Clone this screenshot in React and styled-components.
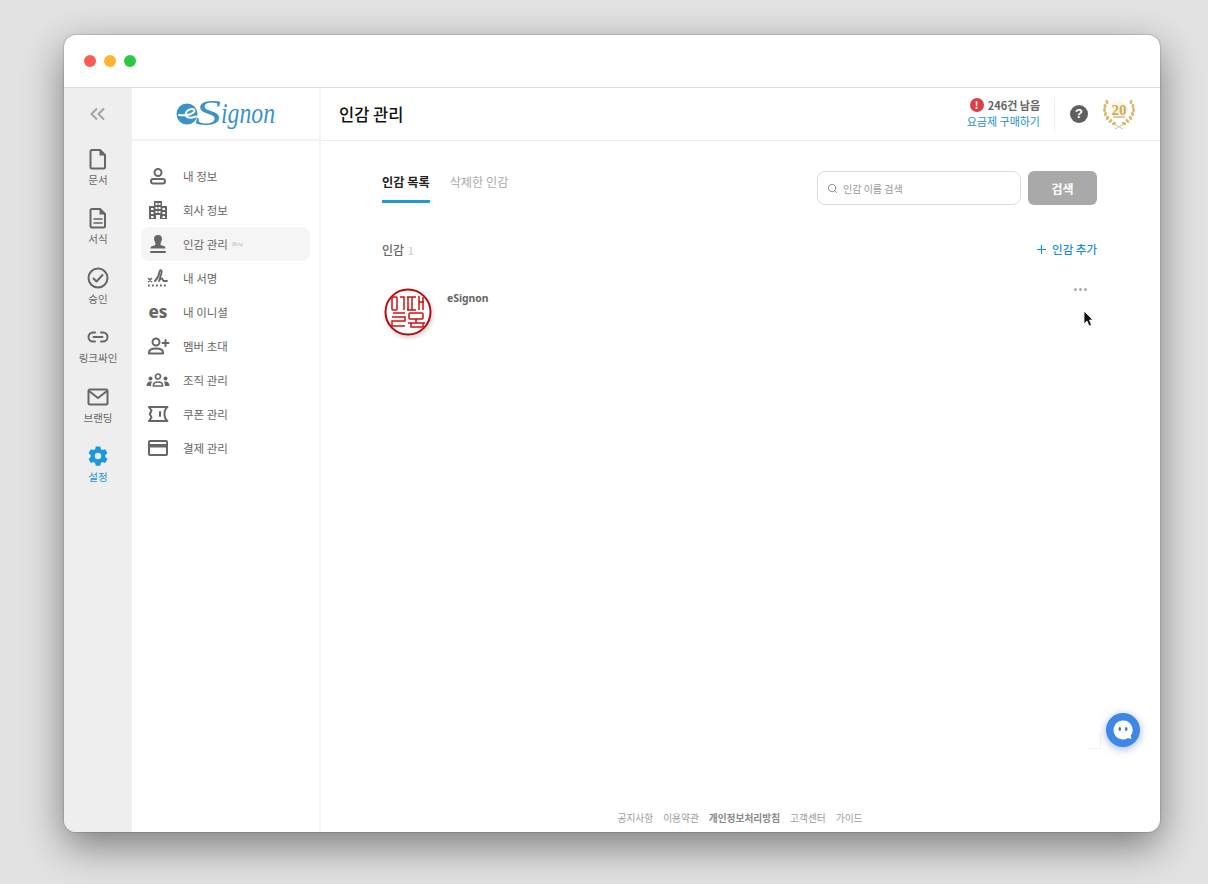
import React from "react";
import styled, { createGlobalStyle } from "styled-components";
import { Search } from "lucide-react";

const GlobalStyle = createGlobalStyle`
  html, body {
    margin: 0;
    padding: 0;
    background: #e2e2e2;
  }
  body {
    font-family: "Noto Sans CJK KR", "Noto Sans", sans-serif;
  }
  * {
    box-sizing: border-box;
  }
`;

const Page = styled.div`
  width: 1208px;
  height: 884px;
  padding: 35px 48px 52px 64px;
  overflow: hidden;
`;

const Win = styled.div`
  position: relative;
  width: 1096px;
  height: 797px;
  background: #fff;
  border-radius: 12px;
  box-shadow: 0 14px 40px rgba(0, 0, 0, 0.46), 0 0 2px rgba(0, 0, 0, 0.4);
  display: flex;
  flex-direction: column;
`;

const TitleBar = styled.div`
  height: 53px;
  flex: none;
  display: flex;
  align-items: center;
  gap: 8px;
  padding: 0 0 1px 20px;
  border-bottom: 1px solid #dedede;
`;

const Dot = styled.span`
  width: 12px;
  height: 12px;
  border-radius: 50%;
  background: ${(p) => p.color};
`;

const Body = styled.div`
  flex: 1;
  display: flex;
  min-height: 0;
`;

const Rail = styled.nav`
  width: 68px;
  flex: none;
  background: #eeeeee;
  border-bottom-left-radius: 12px;
  display: flex;
  flex-direction: column;
  align-items: center;
  padding-top: 17px;
`;

const Collapse = styled.div`
  height: 18px;
  margin-bottom: 25px;
  display: flex;
  align-items: center;
`;

const RailItem = styled.div`
  width: 68px;
  height: 59.4px;
  display: flex;
  flex-direction: column;
  align-items: center;
  color: ${(p) => (p.$active ? "#1b96e0" : "#666")};
  font-size: 10.5px;
  line-height: 15px;
  white-space: nowrap;
`;

const RailIcon = styled.div`
  height: 22px;
  margin-bottom: 2px;
  display: flex;
  align-items: center;
  justify-content: center;
`;

const Side = styled.aside`
  width: 189px;
  flex: none;
  border-right: 2px solid #f4f4f4;
  display: flex;
  flex-direction: column;
`;

const LogoBox = styled.div`
  height: 53px;
  flex: none;
  border-bottom: 2px solid #f2f2f2;
  display: flex;
  align-items: center;
  justify-content: center;
`;

const Menu = styled.div`
  padding: 17.5px 9px 0;
  display: flex;
  flex-direction: column;
`;

const MenuItem = styled.div`
  height: 34px;
  display: flex;
  align-items: center;
  border-radius: 8px;
  background: ${(p) => (p.$active ? "#f5f5f5" : "transparent")};
  color: #666;
  font-size: 11.5px;
  white-space: nowrap;
`;

const MenuIcon = styled.div`
  width: 34px;
  margin-right: 8px;
  display: flex;
  justify-content: center;
  align-items: center;
`;

const EsMark = styled.span`
  font-family: "Noto Sans", sans-serif;
  font-size: 17px;
  font-weight: 800;
  line-height: 20px;
  color: #666;
`;

const Beta = styled.em`
  font-family: "Liberation Serif", serif;
  font-size: 6px;
  color: #bbb;
  margin-left: 4px;
`;

const Main = styled.main`
  flex: 1;
  display: flex;
  flex-direction: column;
  min-width: 0;
`;

const Header = styled.header`
  height: 53px;
  flex: none;
  border-bottom: 1px solid #ececec;
  display: flex;
  align-items: center;
  padding: 0 23px 0 18px;
`;

const Title = styled.h1`
  margin: 0;
  flex: 1;
  font-size: 16.5px;
  font-weight: 500;
  color: #111;
`;

const Usage = styled.div`
  display: flex;
  flex-direction: column;
  align-items: flex-end;
  font-size: 11px;
  line-height: 16px;
  padding: 0 14px 2px 0;
  border-right: 1px solid #eee;
`;

const Remain = styled.div`
  display: flex;
  align-items: center;
  gap: 4px;
  color: #666;
  font-weight: 700;
`;

const Alert = styled.span`
  width: 14px;
  height: 14px;
  border-radius: 50%;
  background: #dc3f45;
  color: #fff;
  font-size: 10px;
  font-weight: 700;
  line-height: 14px;
  text-align: center;
`;

const Buy = styled.span`
  color: #1b8fd6;
`;

const Help = styled.span`
  width: 18px;
  height: 18px;
  margin: 0 13px 0 15px;
  border-radius: 50%;
  background: #5f5f5f;
  color: #fff;
  font-family: "Liberation Sans", sans-serif;
  font-size: 13px;
  font-weight: 700;
  line-height: 18px;
  text-align: center;
`;

const Content = styled.div`
  flex: 1;
  padding: 30px 63px 0 61px;
`;

const TopRow = styled.div`
  display: flex;
  justify-content: space-between;
  align-items: flex-start;
`;

const Tabs = styled.div`
  display: flex;
  gap: 20px;
`;

const Tab = styled.div`
  height: 32px;
  font-size: 12.2px;
  line-height: 23px;
  font-weight: ${(p) => (p.$active ? 700 : 400)};
  color: ${(p) => (p.$active ? "#222" : "#aaa")};
  border-bottom: ${(p) => (p.$active ? "3px solid #1b9ad6" : "none")};
`;

const SearchBar = styled.div`
  display: flex;
  gap: 7px;
`;

const SearchBox = styled.div`
  width: 204px;
  height: 34px;
  border: 1px solid #dcdcdc;
  border-radius: 8px;
  display: flex;
  align-items: center;
  gap: 5px;
  padding-left: 9px;
  color: #999;
  font-size: 10px;
`;

const SearchButton = styled.button`
  width: 69px;
  height: 34px;
  border: 0;
  border-radius: 6px;
  background: #a9a9a9;
  color: #fff;
  font-family: inherit;
  font-size: 12px;
  font-weight: 700;
`;

const SectionRow = styled.div`
  margin-top: 32px;
  height: 24px;
  display: flex;
  justify-content: space-between;
  align-items: center;
`;

const SectionTitle = styled.div`
  font-size: 12px;
  font-weight: 500;
  color: #666;
`;

const Count = styled.span`
  margin-left: 4px;
  font-size: 10px;
  color: #ccc;
`;

const AddLink = styled.div`
  color: #1b8fd6;
  font-size: 11.5px;
  font-weight: 500;
  display: flex;
  align-items: center;
  gap: 6px;
`;

const SealRow = styled.div`
  margin-top: 27px;
  display: flex;
  align-items: flex-start;
  padding-left: 2px;
`;

const SealName = styled.div`
  flex: 1;
  margin-left: 15px;
  margin-top: 2px;
  font-family: "Noto Sans", sans-serif;
  font-size: 10.4px;
  line-height: 16px;
  font-weight: 700;
  color: #666;
`;

const More = styled.div`
  display: flex;
  gap: 2px;
  margin: 0 10px 0 0;
`;

const MoreDot = styled.i`
  width: 3px;
  height: 3px;
  border-radius: 50%;
  background: #aaa;
`;

const Footer = styled.footer`
  height: 21px;
  flex: none;
  display: flex;
  justify-content: center;
  gap: 10px;
  padding-right: 1px;
  font-size: 9.7px;
  line-height: 14px;
  color: #999;
`;

const FootLink = styled.span`
  font-weight: ${(p) => (p.$strong ? 700 : 400)};
  color: ${(p) => (p.$strong ? "#888" : "#999")};
`;

const Cursor = styled.svg`
  position: absolute;
  left: 1019px;
  top: 275px;
`;

const Chat = styled.div`
  position: absolute;
  left: 1042px;
  top: 678px;
  width: 34px;
  height: 34px;
  border-radius: 50%;
  background: #3f87e6;
  box-shadow: 0 2px 8px rgba(40, 90, 200, 0.45);
  display: flex;
  align-items: center;
  justify-content: center;
`;

const Ghost = styled.div`
  position: absolute;
  left: 1025px;
  top: 698px;
  width: 12px;
  height: 16px;
  border-right: 1px solid #f1f1f1;
  border-bottom: 1px solid #f1f1f1;
`;

const SealMark = styled.svg`
  filter: drop-shadow(1px 2px 2px rgba(0, 0, 0, 0.2));
`;

const stroke = { fill: "none", stroke: "#666", strokeWidth: 2, strokeLinecap: "round", strokeLinejoin: "round" };

const railItems = [
  {
    label: "문서",
    icon: (
      <svg width="18" height="22" viewBox="0 0 18 22">
        <path {...stroke} d="M3 2h8l5 5v12a1.5 1.5 0 0 1-1.5 1.5H3A1.5 1.5 0 0 1 1.5 19V3.500A1.5 1.5 0 0 1 3 2z" />
        <path fill="#666" d="M10.5 2l5.5 5.5h-5.500z" />
      </svg>
    ),
  },
  {
    label: "서식",
    icon: (
      <svg width="18" height="22" viewBox="0 0 18 22">
        <path {...stroke} d="M3 2h8l5 5v12a1.5 1.5 0 0 1-1.5 1.5H3A1.5 1.5 0 0 1 1.5 19V3.500A1.5 1.5 0 0 1 3 2z" />
        <path fill="#666" d="M10.5 2l5.5 5.5h-5.500z" />
        <path {...stroke} strokeWidth="1.5" d="M5 12h8M5 16h8" />
      </svg>
    ),
  },
  {
    label: "승인",
    icon: (
      <svg width="22" height="22" viewBox="0 0 22 22">
        <circle {...stroke} cx="11" cy="11" r="9.5" />
        <path {...stroke} d="M6.5 11.5l3 3 6-6.5" />
      </svg>
    ),
  },
  {
    label: "링크싸인",
    icon: (
      <svg width="22" height="22" viewBox="0 0 22 22">
        <path {...stroke} d="M8 6.500H6a4.500 4.500 0 0 0 0 9h2M14 6.500h2a4.500 4.500 0 0 1 0 9h-2M6.500 11h9" />
      </svg>
    ),
  },
  {
    label: "브랜딩",
    icon: (
      <svg width="22" height="22" viewBox="0 0 22 22">
        <rect {...stroke} x="1.5" y="3.5" width="19" height="15" rx="1.5" />
        <path {...stroke} d="M2 5l9 7 9-7" />
      </svg>
    ),
  },
  {
    label: "설정",
    active: true,
    icon: (
      <svg width="22" height="22" viewBox="0 0 24 24">
        <path
          fill="#1b96e0"
          fillRule="evenodd"
          d="M14.5 1.5l.6 3 1.8 1 2.9-1 2.5 4.300-2.300 2v2.400l2.300 2-2.500 4.300-2.900-1-1.800 1-.6 3h-5l-.6-3-1.800-1-2.900 1-2.500-4.300 2.300-2v-2.400l-2.300-2 2.500-4.300 2.900 1 1.800-1 .6-3zM12 8.500a3.500 3.500 0 1 0 0 7 3.500 3.500 0 0 0 0-7z"
        />
      </svg>
    ),
  },
];

const menuItems = [
  {
    label: "내 정보",
    icon: (
      <svg width="18" height="18" viewBox="0 0 18 18">
        <circle {...stroke} cx="9" cy="5.5" r="3.5" />
        <rect {...stroke} x="2" y="12" width="14" height="4.5" rx="2.25" />
      </svg>
    ),
  },
  {
    label: "회사 정보",
    icon: (
      <svg width="20" height="20" viewBox="0 0 20 20">
        <path
          fill="#666"
          fillRule="evenodd"
          d="M6 1h8v5h5v13H1V6h5zM7.500 3v2H9.500V3zm3 0v2h2V3zM7.500 7v2H9.500V7zm3 0v2h2V7zM3 8v2h2.500V8zm11.500 0v2H17V8zM7.500 11v2H9.500v-2zm3 0v2h2v-2zM3 12v2h2.500v-2zm11.500 0v2H17v-2zM8 15v4h4v-4zM3 16v2h2.500v-2zm11.500 0v2H17v-2z"
        />
      </svg>
    ),
  },
  {
    label: "인감 관리",
    active: true,
    beta: true,
    icon: (
      <svg width="18" height="20" viewBox="0 0 18 20">
        <path fill="#666" d="M9 1a4 4 0 0 1 4 4c0 2-1.500 3-1.500 5 0 1 .5 1.500 3 2 1.500.3 2 1 2 2.500H1.500C1.500 13 2 12.300 3.500 12c2.500-.5 3-1 3-2 0-2-1.500-3-1.500-5a4 4 0 0 1 4-4z" />
        <rect fill="#666" x="1" y="17" width="16" height="2" rx="1" />
      </svg>
    ),
  },
  {
    label: "내 서명",
    icon: (
      <svg width="22" height="20" viewBox="0 0 22 20">
        <path {...stroke} strokeWidth="1.6" d="M1.5 10.500l3 3M4.500 10.500l-3 3" />
        <path {...stroke} strokeWidth="1.8" d="M8 13c2-2 4-6 4.500-9 .3-2 2-2.500 2.200-.7.2 2-1.700 6-2.700 9.700 1-2 3-3.500 3.500-2 .3 1 .3 2 1.500 2h3" />
        <path {...stroke} strokeWidth="1.8" strokeDasharray="1.8 2.2" strokeLinecap="butt" d="M1 17.500h20" />
      </svg>
    ),
  },
  {
    label: "내 이니셜",
    icon: <EsMark>es</EsMark>,
  },
  {
    label: "멤버 초대",
    icon: (
      <svg width="23" height="18" viewBox="0 0 23 18">
        <circle {...stroke} cx="9" cy="5" r="3.5" />
        <path {...stroke} d="M2 16.500v-1C2 13 4 11.500 9 11.500s7 1.500 7 4v1z" />
        <path {...stroke} d="M18.500 3v6M15.500 6h6" />
      </svg>
    ),
  },
  {
    label: "조직 관리",
    icon: (
      <svg width="24" height="14" viewBox="0 0 24 14">
        <circle {...stroke} strokeWidth="1.7" cx="12" cy="3.5" r="2.5" />
        <path {...stroke} strokeWidth="1.7" d="M7.500 13v-1c0-2 2-3 4.500-3s4.500 1 4.500 3v1z" />
        <circle fill="#666" cx="4.5" cy="5.5" r="2" />
        <circle fill="#666" cx="19.5" cy="5.5" r="2" />
        <path fill="#666" d="M0.500 13c0-3 1.500-4.500 4-4.500 1 0 1.500.2 1.500.2-.7 1-1 2.800-1 4.300zM23.500 13c0-3-1.500-4.500-4-4.500-1 0-1.500.2-1.500.2.7 1 1 2.800 1 4.300z" />
      </svg>
    ),
  },
  {
    label: "쿠폰 관리",
    icon: (
      <svg width="22" height="18" viewBox="0 0 22 18">
        <path {...stroke} d="M2 2h18.500c-2 1.500-3 3.800-3 7s1 5.500 3 7H2l2.500-3.500L2.800 9l1.700-3.500z" />
        <path {...stroke} d="M13 7v4" />
      </svg>
    ),
  },
  {
    label: "결제 관리",
    icon: (
      <svg width="22" height="18" viewBox="0 0 22 18">
        <rect {...stroke} x="2" y="2" width="18" height="14" rx="1" />
        <rect fill="#666" x="2" y="5" width="18" height="3.5" />
      </svg>
    ),
  },
];

const LogoMark = () => (
  <svg width="100" height="46" viewBox="0 0 100 46">
    <circle cx="11" cy="23" r="10.500" fill="#3a93c6" />
    <path d="M3 24c6 .8 12-.2 15-3 1.300-1.300 0-3.500-2.500-3-4 .8-6 3.200-5.500 6 .4 3 4.500 3.500 10 1.500" fill="none" stroke="#fff" strokeWidth="2" strokeLinecap="round" />
    <text x="19" y="34" fontFamily="Liberation Serif, serif" fontStyle="italic" fontSize="36" fill="#3a93c6" textLength="26" lengthAdjust="spacingAndGlyphs">
      S
    </text>
    <text x="45" y="32" fontFamily="Liberation Serif, serif" fontStyle="italic" fontSize="29" fill="#3a93c6" textLength="54" lengthAdjust="spacingAndGlyphs">
      ignon
    </text>
  </svg>
);

const leaves = [
  [6, 4, -15], [4, 8, -8], [3.5, 12, 0], [4.5, 16, 14], [6.5, 20, 30], [9.5, 23, 48], [13, 25.5, 62],
];

const Laurel = () => (
  <svg width="36" height="32" viewBox="0 0 36 32">
    <g fill="#dcb765">
      {leaves.map(([x, y, r]) => (
        <React.Fragment key={y}>
          <ellipse cx={x} cy={y} rx="1.4" ry="2.3" transform={`rotate(${r} ${x} ${y})`} />
          <ellipse cx={36 - x} cy={y} rx="1.4" ry="2.3" transform={`rotate(${-r} ${36 - x} ${y})`} />
        </React.Fragment>
      ))}
    </g>
    <path d="M13 26l9 5M23 26l-9 5" stroke="#cfc3a5" strokeWidth="1" />
    <circle cx="18" cy="12" r="9" fill="#fdf6e0" />
    <text x="18" y="16.500" textAnchor="middle" fontFamily="Liberation Serif, serif" fontWeight="700" fontSize="15" fill="#cdaa58">
      20
    </text>
    <path d="M12 19h12" stroke="#b9a36c" strokeWidth="1" />
  </svg>
);

const Seal = () => (
  <SealMark width="48" height="48" viewBox="0 0 48 48">
    <circle cx="24" cy="24" r="22.5" fill="#fff" stroke="#b80c0c" strokeWidth="2" />
    <g fill="none" stroke="#d01010" strokeWidth="1.500">
      <rect x="8" y="9" width="5" height="13" rx="1" />
      <path d="M16 9h4v13" />
      <path d="M23 9h9M24 9v13M28 9v13M23 22h9M35 8v14M35 14h5M39 9v13" />
      <path d="M9 25h12M8 29h13v4H8v5h13" />
      <rect x="25" y="25" width="14" height="6" rx="1" />
      <path d="M32 31v4M24 35h17M27 35v4h12v-4" />
    </g>
  </SealMark>
);

export default function App() {
  return (
    <>
      <GlobalStyle />
      <Page>
        <Win>
          <TitleBar>
            <Dot color="#fb5a55" />
            <Dot color="#fdb52f" />
            <Dot color="#29c941" />
          </TitleBar>
          <Body>
            <Rail>
              <Collapse>
                <svg width="16" height="14" viewBox="0 0 16 14">
                  <path d="M7 1.500L1.500 7 7 12.500M14 1.500L8.500 7l5.500 5.500" fill="none" stroke="#a3a3a3" strokeWidth="2" />
                </svg>
              </Collapse>
              {railItems.map((item) => (
                <RailItem key={item.label} $active={item.active}>
                  <RailIcon>{item.icon}</RailIcon>
                  {item.label}
                </RailItem>
              ))}
            </Rail>
            <Side>
              <LogoBox>
                <LogoMark />
              </LogoBox>
              <Menu>
                {menuItems.map((item) => (
                  <MenuItem key={item.label} $active={item.active}>
                    <MenuIcon>{item.icon}</MenuIcon>
                    {item.label}
                    {item.beta && <Beta>Beta</Beta>}
                  </MenuItem>
                ))}
              </Menu>
            </Side>
            <Main>
              <Header>
                <Title>인감 관리</Title>
                <Usage>
                  <Remain>
                    <Alert>!</Alert>
                    246건 남음
                  </Remain>
                  <Buy>요금제 구매하기</Buy>
                </Usage>
                <Help>?</Help>
                <Laurel />
              </Header>
              <Content>
                <TopRow>
                  <Tabs>
                    <Tab $active>인감 목록</Tab>
                    <Tab>삭제한 인감</Tab>
                  </Tabs>
                  <SearchBar>
                    <SearchBox>
                      <Search size={11} color="#888" />
                      인감 이름 검색
                    </SearchBox>
                    <SearchButton>검색</SearchButton>
                  </SearchBar>
                </TopRow>
                <SectionRow>
                  <SectionTitle>
                    인감<Count>1</Count>
                  </SectionTitle>
                  <AddLink>
                    <svg width="9" height="9" viewBox="0 0 9 9">
                      <path d="M4.500 0v9M0 4.500h9" stroke="#1b8fd6" strokeWidth="1.200" />
                    </svg>
                    인감 추가
                  </AddLink>
                </SectionRow>
                <SealRow>
                  <Seal />
                  <SealName>eSignon</SealName>
                  <More>
                    <MoreDot />
                    <MoreDot />
                    <MoreDot />
                  </More>
                </SealRow>
              </Content>
              <Footer>
                <FootLink>공지사항</FootLink>
                <FootLink>이용약관</FootLink>
                <FootLink $strong>개인정보처리방침</FootLink>
                <FootLink>고객센터</FootLink>
                <FootLink>가이드</FootLink>
              </Footer>
            </Main>
          </Body>
          <Cursor width="12" height="18" viewBox="0 0 12 18">
            <path d="M1 1v13l3-3 2 5 2.500-1-2-5H10z" fill="#111" stroke="#fff" strokeWidth="0.800" />
          </Cursor>
          <Ghost />
          <Chat>
            <svg width="22" height="22" viewBox="0 0 22 22">
              <path d="M11 1.500a9.500 9.500 0 1 0 5 17.600l3.500.9-.8-3.300A9.500 9.500 0 0 0 11 1.500z" fill="#fff" />
              <ellipse cx="7.800" cy="10" rx="1.300" ry="2" fill="#3f78c8" />
              <ellipse cx="14.200" cy="10" rx="1.300" ry="2" fill="#3f78c8" />
            </svg>
          </Chat>
        </Win>
      </Page>
    </>
  );
}
